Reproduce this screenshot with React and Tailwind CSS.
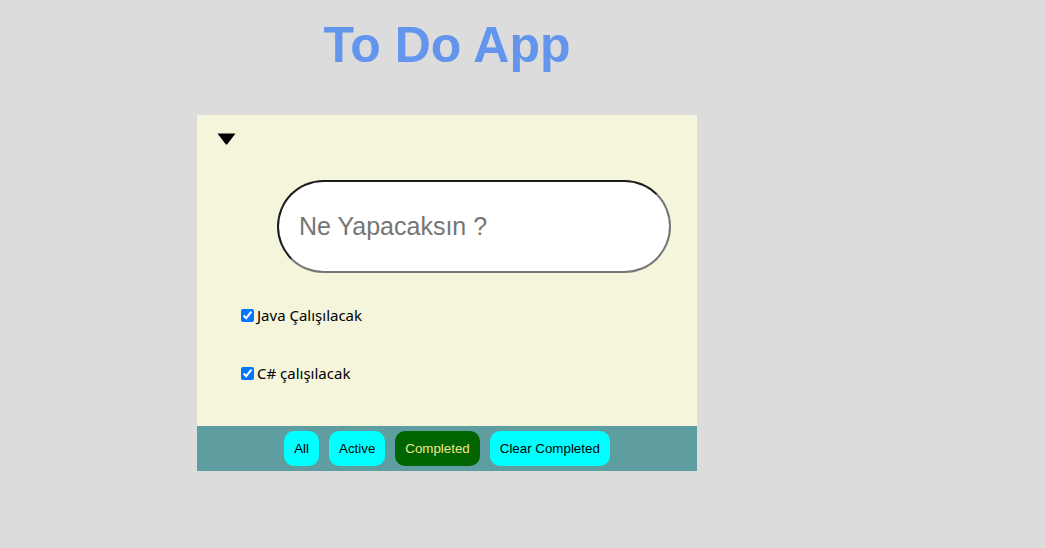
export default function App() {
  return (
    <div className="min-h-[548px] w-full bg-[#dcdcdc] font-['Liberation_Sans',Arial,sans-serif]">
      <div className="ml-[197px] w-[500px] pt-[18px]">
        <h1 className="text-center text-[50px] leading-[55px] font-bold text-[#6495ed] mb-[42px]">
          To Do App
        </h1>
        <div className="bg-[#f5f5dc]">
          <div className="pt-[18px] pl-[20px]">
            <svg width="19" height="12" viewBox="0 0 19 12" className="block">
              <path d="M0.5 0.5 L18.5 0.5 L10.3 11.2 Q9.5 12 8.7 11.2 Z" fill="#000" />
            </svg>
          </div>
          <div className="pl-[80px] mt-[35px]">
            <input
              type="text"
              placeholder="Ne Yapacaksın ?"
              className="block w-[394px] h-[93px] rounded-full bg-white border-2 border-t-[#1c1c1c] border-l-[#1c1c1c] border-b-[#767676] border-r-[#767676] pl-[20px] text-[25px] text-black placeholder:text-[#757575] outline-none font-['Liberation_Sans',Arial,sans-serif]"
            />
          </div>
          <ul className="pl-[40px] pt-[30px] pb-[41px] flex flex-col gap-[34px] font-['Noto_Sans',sans-serif] text-[15px] text-black">
            <li className="flex items-center h-[24px]">
              <input type="checkbox" defaultChecked className="w-[13px] h-[13px] ml-[4px] mr-[3px] accent-[#0075ff]" />
              <span>Java Çalışılacak</span>
            </li>
            <li className="flex items-center h-[24px]">
              <input type="checkbox" defaultChecked className="w-[13px] h-[13px] ml-[4px] mr-[3px] accent-[#0075ff]" />
              <span>C# çalışılacak</span>
            </li>
          </ul>
          <div className="bg-[#5f9ea0] py-[5px] flex justify-center gap-[10px] text-[13.33px] leading-[15px]">
            <button className="bg-[#00ffff] text-black px-[10px] py-[10px] rounded-[10px]">All</button>
            <button className="bg-[#00ffff] text-black px-[10px] py-[10px] rounded-[10px]">Active</button>
            <button className="bg-[#006400] text-[#f0e68c] px-[10px] py-[10px] rounded-[10px]">Completed</button>
            <button className="bg-[#00ffff] text-black px-[10px] py-[10px] rounded-[10px]">Clear Completed</button>
          </div>
        </div>
      </div>
    </div>
  );
}
